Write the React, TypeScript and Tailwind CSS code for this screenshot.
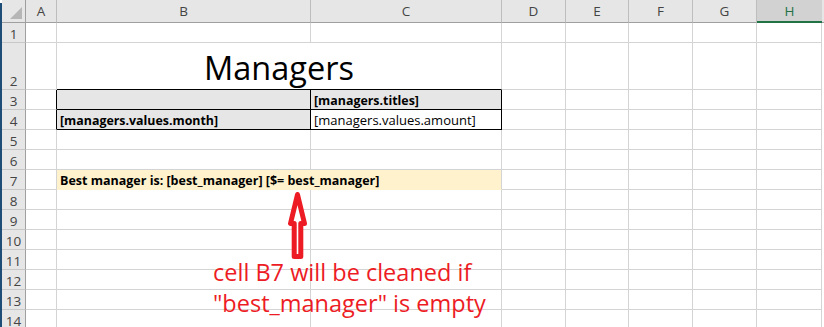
import React from "react";

const cols = ["A", "B", "C", "D", "E", "F", "G", "H"];
const rows = [1, 2, 3, 4, 5, 6, 7, 8, 9, 10, 11, 12, 13, 14];

function RowHead({ n }: { n: number }) {
  return (
    <div className="flex items-end justify-center border-r border-b border-r-[#9f9f9f] border-b-[#c8c8c8] bg-[#e6e6e6] pb-[1px] text-[13.5px] leading-none text-[#444]">
      {n}
    </div>
  );
}

function Cell({ className = "", children }: { className?: string; children?: React.ReactNode }) {
  return (
    <div className={`flex items-end overflow-visible whitespace-nowrap border-r border-b px-[3px] pb-[2px] leading-none text-black ${className}`}>
      {children}
    </div>
  );
}

function GridRow({ n }: { n: number }) {
  const g = "border-[#d4d4d4]";
  if (n === 2) {
    return (
      <>
        <RowHead n={n} />
        <Cell className={g} />
        <div className="col-span-2 flex items-end justify-center border-r border-b border-r-[#d4d4d4] border-b-black pb-[5px] text-[32.5px] leading-none">
          Managers
        </div>
        {cols.slice(3).map((c) => (
          <Cell key={c} className={g} />
        ))}
        <div />
      </>
    );
  }
  if (n === 3 || n === 4) {
    return (
      <>
        <RowHead n={n} />
        <Cell className="border-r-black border-b-[#d4d4d4]" />
        <Cell className="border-black bg-[#e7e6e6] text-[12.4px] font-bold">
          {n === 4 ? "[managers.values.month]" : ""}
        </Cell>
        <Cell className={`border-black ${n === 3 ? "bg-[#e7e6e6] text-[12.4px] font-bold" : "text-[13px]"}`}>
          {n === 3 ? "[managers.titles]" : "[managers.values.amount]"}
        </Cell>
        {cols.slice(3).map((c) => (
          <Cell key={c} className={g} />
        ))}
        <div />
      </>
    );
  }
  if (n === 7) {
    return (
      <>
        <RowHead n={n} />
        <Cell className={g} />
        <Cell className="col-span-2 border-r-[#d4d4d4] border-b-[#fff2cc] bg-[#fff2cc] text-[12.5px] font-bold">
          Best manager is: [best_manager] [$= best_manager]
        </Cell>
        {cols.slice(3).map((c) => (
          <Cell key={c} className={g} />
        ))}
        <div />
      </>
    );
  }
  return (
    <>
      <RowHead n={n} />
      {cols.map((c) => (
        <Cell key={c} className={g} />
      ))}
      <div />
    </>
  );
}

export default function App() {
  return (
    <div className="relative h-[327px] w-[824px] overflow-hidden bg-white font-['Open_Sans',sans-serif]">
      <div className="flex">
        <div className="mt-[3px] h-[324px] w-[2px] bg-[#1e4d78]" />
        <div className="grid grid-cols-[24px_31px_254px_191px_64px_63px_64px_64px_65px_2px] grid-rows-[23px_20px_47px_repeat(12,20px)]">
          {/* corner */}
          <div className="flex items-end justify-end border-r border-b border-[#9f9f9f] bg-[#e6e6e6] pr-[3px] pb-[3px]">
            <svg width="12" height="12" viewBox="0 0 12 12">
              <polygon points="12,0 12,12 0,12" fill="#b6b6b6" />
            </svg>
          </div>
          {cols.map((c) =>
            c === "H" ? (
              <div
                key={c}
                className="flex items-center justify-center border-b-2 border-[#217346] bg-[#d2d2d2] pt-[2px] text-[13.5px] leading-none text-[#217346]"
              >
                {c}
              </div>
            ) : (
              <div
                key={c}
                className="flex items-center justify-center border-r border-b border-r-[#bdbdbd] border-b-[#9f9f9f] bg-[#e6e6e6] pt-[2px] text-[13.5px] leading-none text-[#444]"
              >
                {c}
              </div>
            )
          )}
          <div className="border-b border-[#9f9f9f] bg-[#e6e6e6]" />
          {rows.map((n) => (
            <GridRow key={n} n={n} />
          ))}
        </div>
      </div>

      {/* annotation */}
      <svg className="pointer-events-none absolute top-0 left-0" width="824" height="327" viewBox="0 0 824 327">
        <polygon
          points="297.5,194.5 290.5,223.5 294.2,223.5 294.2,256.5 300.8,256.5 300.8,223.5 304.5,223.5"
          fill="white"
          stroke="#ed1c24"
          strokeWidth="5"
          strokeLinejoin="round"
        />
      </svg>
      <div className="absolute top-[257px] left-[213px] text-[23.5px] leading-[31px] whitespace-nowrap text-[#ed1c24]">
        <div>cell B7 will be cleaned if</div>
        <div>"best_manager" is empty</div>
      </div>
    </div>
  );
}
